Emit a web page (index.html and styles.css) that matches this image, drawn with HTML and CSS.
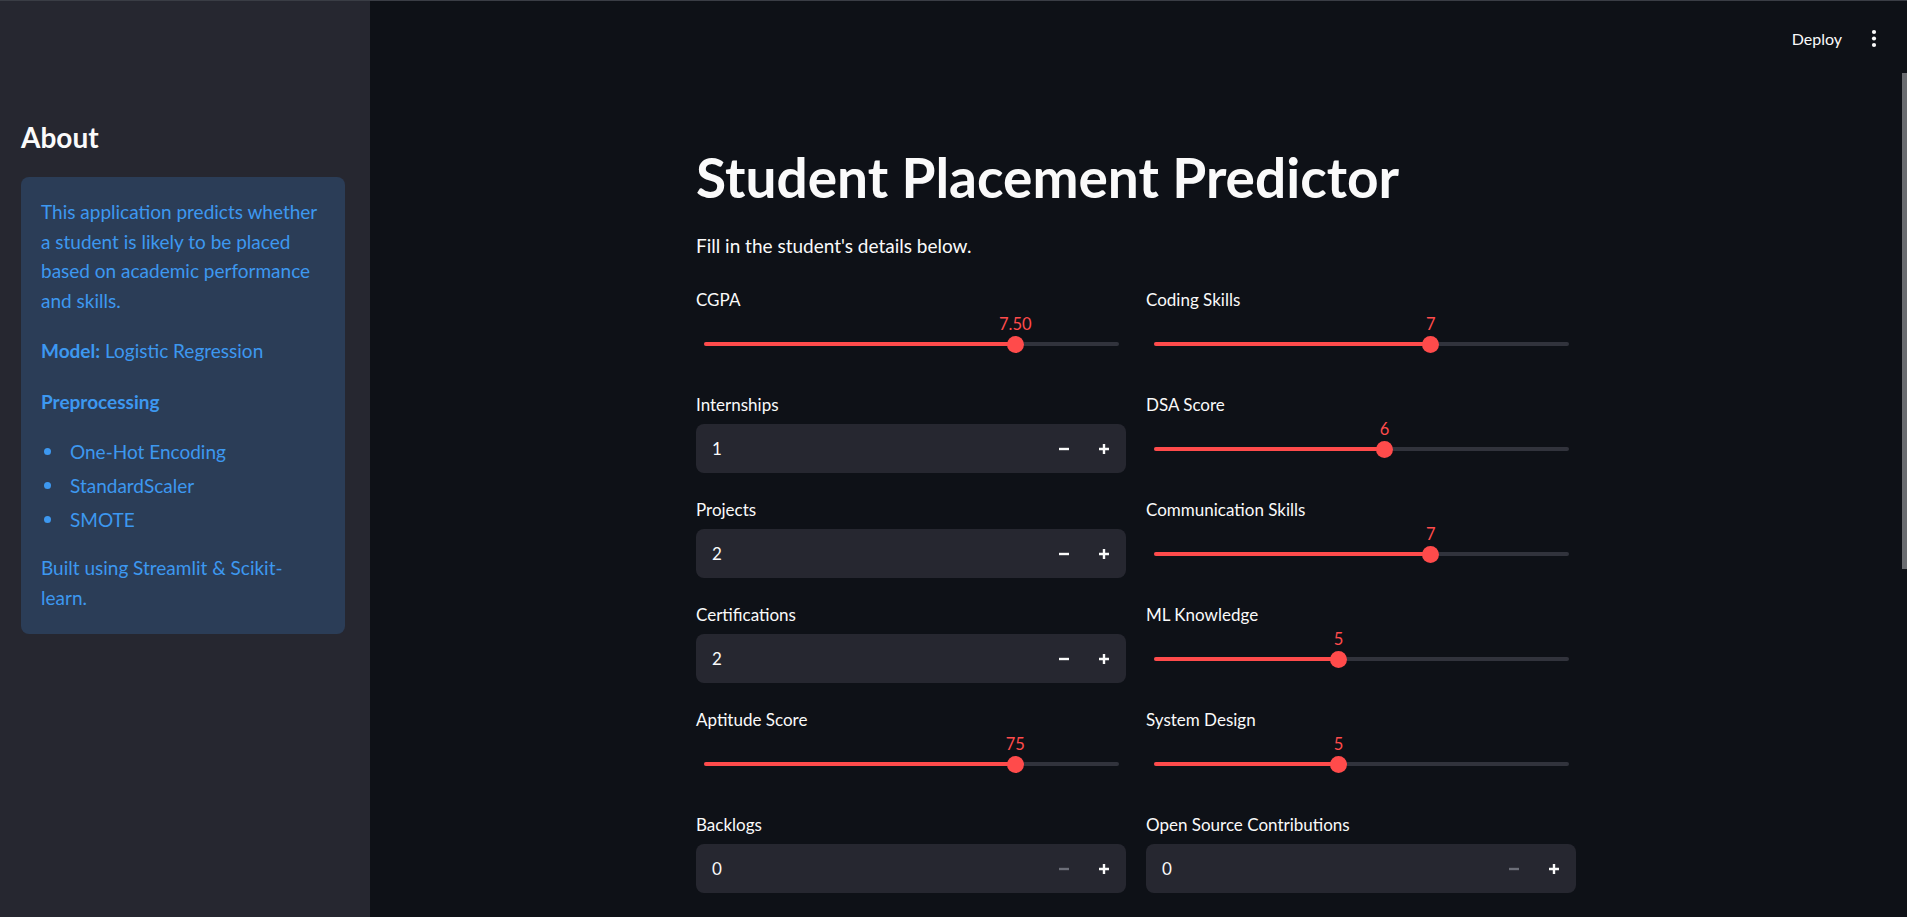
FILE: index.html
```html
<!DOCTYPE html>
<html lang="en">
<head>
    <meta charset="UTF-8">
    <meta name="viewport" content="width=device-width, initial-scale=1.0">
    <title>Student Placement Predictor</title>
    <link rel="stylesheet" href="styles.css">
</head>
<body>
    <div class="app">
        <aside class="sidebar">
            <h2>About</h2>
            <div class="info">
                <p>This application predicts whether a student is likely to be placed based on academic performance and skills.</p>
                <p><strong>Model:</strong> Logistic Regression</p>
                <p><strong>Preprocessing</strong></p>
                <ul>
                    <li>One-Hot Encoding</li>
                    <li>StandardScaler</li>
                    <li>SMOTE</li>
                </ul>
                <p>Built using Streamlit &amp; Scikit-learn.</p>
            </div>
        </aside>

        <main class="main">
            <header class="topbar">
                <span class="deploy">Deploy</span>
                <svg class="kebab" width="6" height="19" viewBox="0 0 6 19">
                    <circle cx="3" cy="3" r="2.1" fill="#fafafa"/>
                    <circle cx="3" cy="9.5" r="2.1" fill="#fafafa"/>
                    <circle cx="3" cy="16" r="2.1" fill="#fafafa"/>
                </svg>
            </header>

            <div class="block">
                <h1>Student Placement Predictor</h1>
                <p class="lead">Fill in the student's details below.</p>

                <div class="form">
                    <div class="field">
                        <label>CGPA</label>
                        <div class="rail">
                            <div class="fill" style="width: 75%"></div>
                            <span class="value" style="left: 75%">7.50</span>
                            <span class="thumb" style="left: 75%"></span>
                        </div>
                    </div>
                    <div class="field">
                        <label>Coding Skills</label>
                        <div class="rail">
                            <div class="fill" style="width: 66.67%"></div>
                            <span class="value" style="left: 66.67%">7</span>
                            <span class="thumb" style="left: 66.67%"></span>
                        </div>
                    </div>

                    <div class="field">
                        <label>Internships</label>
                        <div class="number">
                            <span class="num">1</span>
                            <button class="step"><svg width="12" height="12" viewBox="0 0 12 12"><path d="M1 6h10" stroke="#fafafa" stroke-width="2.4"/></svg></button>
                            <button class="step"><svg width="12" height="12" viewBox="0 0 12 12"><path d="M1 6h10M6 1v10" stroke="#fafafa" stroke-width="2.4"/></svg></button>
                        </div>
                    </div>
                    <div class="field">
                        <label>DSA Score</label>
                        <div class="rail">
                            <div class="fill" style="width: 55.56%"></div>
                            <span class="value" style="left: 55.56%">6</span>
                            <span class="thumb" style="left: 55.56%"></span>
                        </div>
                    </div>

                    <div class="field">
                        <label>Projects</label>
                        <div class="number">
                            <span class="num">2</span>
                            <button class="step"><svg width="12" height="12" viewBox="0 0 12 12"><path d="M1 6h10" stroke="#fafafa" stroke-width="2.4"/></svg></button>
                            <button class="step"><svg width="12" height="12" viewBox="0 0 12 12"><path d="M1 6h10M6 1v10" stroke="#fafafa" stroke-width="2.4"/></svg></button>
                        </div>
                    </div>
                    <div class="field">
                        <label>Communication Skills</label>
                        <div class="rail">
                            <div class="fill" style="width: 66.67%"></div>
                            <span class="value" style="left: 66.67%">7</span>
                            <span class="thumb" style="left: 66.67%"></span>
                        </div>
                    </div>

                    <div class="field">
                        <label>Certifications</label>
                        <div class="number">
                            <span class="num">2</span>
                            <button class="step"><svg width="12" height="12" viewBox="0 0 12 12"><path d="M1 6h10" stroke="#fafafa" stroke-width="2.4"/></svg></button>
                            <button class="step"><svg width="12" height="12" viewBox="0 0 12 12"><path d="M1 6h10M6 1v10" stroke="#fafafa" stroke-width="2.4"/></svg></button>
                        </div>
                    </div>
                    <div class="field">
                        <label>ML Knowledge</label>
                        <div class="rail">
                            <div class="fill" style="width: 44.44%"></div>
                            <span class="value" style="left: 44.44%">5</span>
                            <span class="thumb" style="left: 44.44%"></span>
                        </div>
                    </div>

                    <div class="field">
                        <label>Aptitude Score</label>
                        <div class="rail">
                            <div class="fill" style="width: 75%"></div>
                            <span class="value" style="left: 75%">75</span>
                            <span class="thumb" style="left: 75%"></span>
                        </div>
                    </div>
                    <div class="field">
                        <label>System Design</label>
                        <div class="rail">
                            <div class="fill" style="width: 44.44%"></div>
                            <span class="value" style="left: 44.44%">5</span>
                            <span class="thumb" style="left: 44.44%"></span>
                        </div>
                    </div>

                    <div class="field">
                        <label>Backlogs</label>
                        <div class="number">
                            <span class="num">0</span>
                            <button class="step" disabled><svg width="12" height="12" viewBox="0 0 12 12"><path d="M1 6h10" stroke="#6c6e78" stroke-width="2.4"/></svg></button>
                            <button class="step"><svg width="12" height="12" viewBox="0 0 12 12"><path d="M1 6h10M6 1v10" stroke="#fafafa" stroke-width="2.4"/></svg></button>
                        </div>
                    </div>
                    <div class="field">
                        <label>Open Source Contributions</label>
                        <div class="number">
                            <span class="num">0</span>
                            <button class="step" disabled><svg width="12" height="12" viewBox="0 0 12 12"><path d="M1 6h10" stroke="#6c6e78" stroke-width="2.4"/></svg></button>
                            <button class="step"><svg width="12" height="12" viewBox="0 0 12 12"><path d="M1 6h10M6 1v10" stroke="#fafafa" stroke-width="2.4"/></svg></button>
                        </div>
                    </div>
                </div>
            </div>

            <div class="scroll-thumb"></div>
        </main>
    </div>
</body>
</html>
```

FILE: styles.css
```css
body {
    margin: 0;
    font-family: Lato, "Liberation Sans", sans-serif;
    color: #fafafa;
    background-color: #0e1117;
    height: 100vh;
    overflow: hidden;
}
.app {
    display: flex;
    height: 100vh;
    border-top: 1px solid #3a3d45;
    box-sizing: border-box;
}

/* sidebar */
.sidebar {
    width: 370px;
    flex-shrink: 0;
    background: #262730;
    padding: 0 25px 0 21px;
    box-sizing: border-box;
}
.sidebar h2 {
    margin: 118px 0 22px;
    font-size: 28px;
    line-height: 36px;
    font-weight: 700;
}
.info {
    background: #2b3d57;
    color: #3d98f0;
    border-radius: 8px;
    padding: 20px 20px 21px;
    font-size: 19px;
    line-height: 29.7px;
}
.info p {
    margin: 0 0 20.5px;
}
.info p:last-child {
    margin-bottom: 0;
}
.info strong {
    font-weight: 700;
}
.info ul {
    margin: 0 0 19px;
    padding: 0;
    list-style: none;
}
.info li {
    display: flex;
    align-items: center;
    margin-bottom: 4.3px;
}
.info li::before {
    content: "";
    width: 7px;
    height: 7px;
    border-radius: 50%;
    background: #3d98f0;
    margin: 0 19px 0 3px;
}

/* main area */
.main {
    flex: 1;
    position: relative;
    padding-right: 5px;
}
.topbar {
    height: 74px;
    display: flex;
    justify-content: flex-end;
    align-items: center;
    gap: 29px;
    padding-right: 25px;
}
.deploy {
    font-size: 16px;
}
.kebab {
    display: block;
}
.block {
    width: 880px;
    margin: 71px auto 0;
}
h1 {
    margin: 0;
    font-size: 55px;
    line-height: 62px;
    font-weight: 700;
}
.lead {
    margin: 23px 0 28px;
    font-size: 19px;
    line-height: 29px;
}
.form {
    display: grid;
    grid-template-columns: 430px 430px;
    grid-auto-rows: 80px;
    column-gap: 20px;
    row-gap: 25px;
}
.field label {
    display: block;
    padding-top: 2px;
    font-size: 17px;
    line-height: 20px;
}

/* slider */
.rail {
    position: relative;
    height: 4px;
    margin: 32px 7px 0 8px;
    background: #31333c;
    border-radius: 2px;
}
.fill {
    height: 100%;
    background: #ff4b4b;
    border-radius: 2px;
}
.thumb {
    position: absolute;
    top: 50%;
    width: 17px;
    height: 17px;
    margin: -8.5px 0 0 -8.5px;
    border-radius: 50%;
    background: #ff4b4b;
}
.value {
    position: absolute;
    bottom: 12px;
    transform: translateX(-50%);
    color: #ff4b4b;
    font-size: 16.5px;
    line-height: 20px;
}

/* number input */
.number {
    margin-top: 9px;
    height: 49px;
    background: #262730;
    border-radius: 8px;
    display: flex;
    align-items: center;
    padding: 0 2px 0 16px;
}
.num {
    flex: 1;
    font-size: 17px;
}
.step {
    width: 40px;
    height: 49px;
    display: flex;
    align-items: center;
    justify-content: center;
    background: none;
    border: none;
    padding: 0;
    cursor: pointer;
}
.step svg {
    display: block;
}

.scroll-thumb {
    position: absolute;
    right: 0;
    top: 72px;
    width: 5px;
    height: 496px;
    background: #6a6c70;
}
```
